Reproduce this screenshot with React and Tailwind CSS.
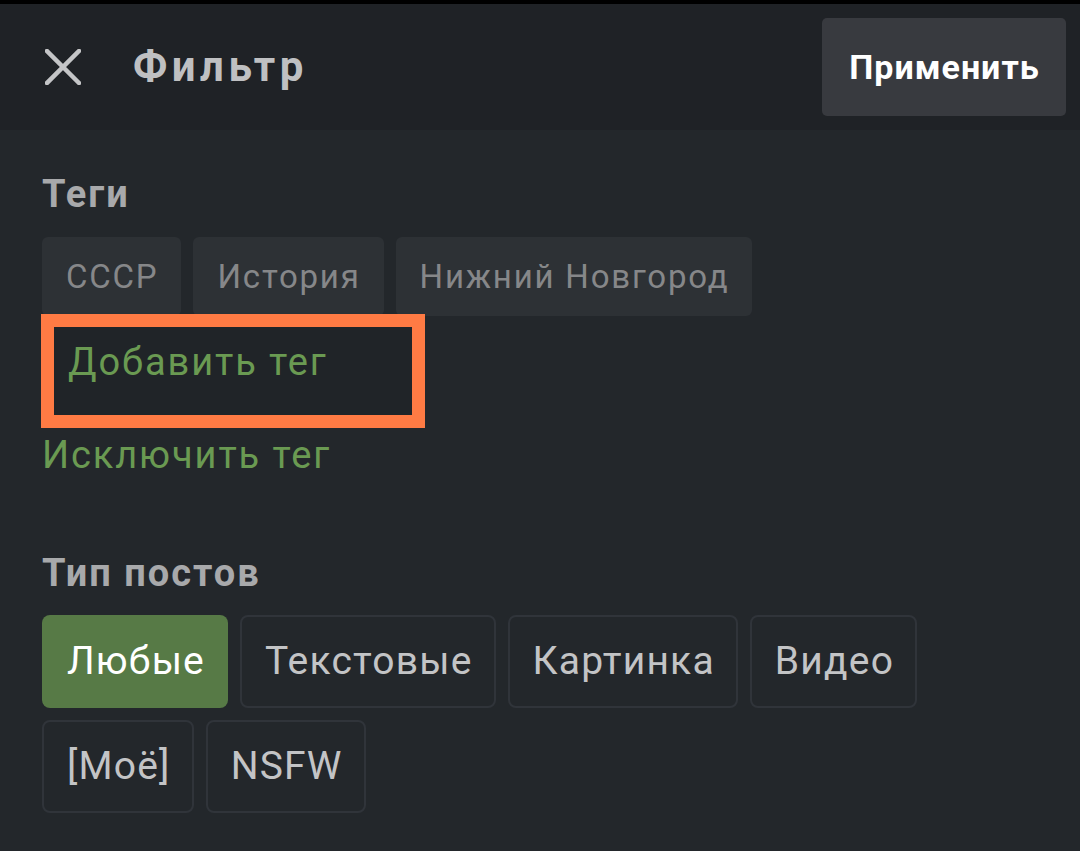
const tags = ["СССР", "История", "Нижний Новгород"];
const row1 = ["Любые", "Текстовые", "Картинка", "Видео"];
const row2 = ["[Моё]", "NSFW"];

function TypeButton({ label, active }) {
  return (
    <div
      className={
        active
          ? "flex h-[93px] items-center rounded-lg bg-[#577a46] pl-[25px] pr-[23px] text-[39px] tracking-[1.2px] text-white"
          : "flex h-[93px] items-center rounded-lg border-2 border-[#30343a] pl-[23px] pr-[21px] text-[39px] tracking-[1.2px] text-[#c3c4c6]"
      }
    >
      {label}
    </div>
  );
}

export default function App() {
  return (
    <div
      className="flex h-[851px] w-[1080px] flex-col overflow-hidden bg-[#23272b]"
      style={{ fontFamily: "Roboto, 'Noto Sans', sans-serif" }}
    >
      <div className="h-[4px] bg-black" />

      {/* header */}
      <div className="flex h-[126px] items-center bg-[#1f2226] pl-[45px] pr-[14px]">
        <svg width="36" height="36" viewBox="0 0 36 36" className="shrink-0">
          <path d="M2 2 L34 34 M34 2 L2 34" stroke="#c4c5c7" strokeWidth="4.5" strokeLinecap="square" />
        </svg>
        <h1 className="ml-[52px] text-[42px] font-bold leading-none tracking-[4.5px] text-[#bfc0c2]">Фильтр</h1>
        <button className="ml-auto flex h-[98px] w-[244px] items-center justify-center rounded-[5px] bg-[#383a3f] pl-[1px] text-[34px] font-bold tracking-[1px] text-white">
          Применить
        </button>
      </div>

      {/* body */}
      <div className="flex flex-col px-[42px] pt-[40px]">
        <div className="text-[38px] font-bold leading-[48px] tracking-[2px] text-[#a8a9ab]">Теги</div>

        <div className="mt-[19px] flex gap-[12px]">
          {tags.map((t) => (
            <div
              key={t}
              className="flex h-[79px] items-center rounded-md bg-[#2d3135] pl-[24px] pr-[23px] text-[33px] tracking-[1.8px] text-[#868789]"
            >
              {t}
            </div>
          ))}
        </div>

        <div className="-mt-[2px] -ml-[1px] h-[114px] w-[384px] border-[13px] border-[#ff7b44] bg-[#202428] pl-[14px] pt-[11px]">
          <span className="text-[38px] leading-[48px] tracking-[1.9px] text-[#6a9a52]">Добавить тег</span>
        </div>

        <div className="mt-[3px] text-[38px] leading-[48px] tracking-[1.9px] text-[#6a9a52]">Исключить тег</div>

        <div className="mt-[70px] text-[38px] font-bold leading-[48px] tracking-[2px] text-[#a8a9ab]">Тип постов</div>

        <div className="mt-[18px] flex gap-[12px]">
          {row1.map((t, i) => (
            <TypeButton key={t} label={t} active={i === 0} />
          ))}
        </div>
        <div className="mt-[12px] flex gap-[12px]">
          {row2.map((t) => (
            <TypeButton key={t} label={t} />
          ))}
        </div>
      </div>
    </div>
  );
}
